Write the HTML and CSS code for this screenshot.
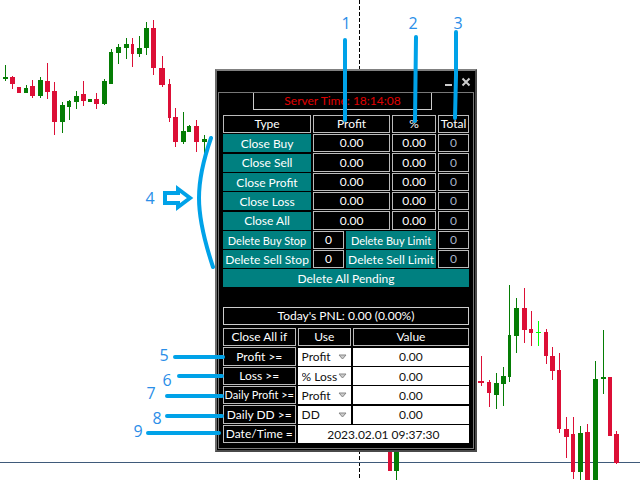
FILE: index.html
```
<!DOCTYPE html>
<html lang="en">
  <head>
    <meta charset="UTF-8" />
    <meta name="viewport" content="width=device-width, initial-scale=1.0" />
    <title>Trade Panel</title>
    <link rel="stylesheet" href="styles.css">
  </head>
  <body>
    <div class="desktop">
      <!-- Price chart -->
      <svg class="chart" id="chart" aria-hidden="true">
        <line class="period" x1="359.5" y1="0" x2="359.5" y2="100%" />
        <line class="price" x1="0" y1="462.5" x2="100%" y2="462.5" />
      </svg>

      <!-- Trade panel -->
      <div class="panel">
        <div class="titlebar">
          <button class="win-btn" aria-label="Minimize">
            <svg width="10" height="10" viewBox="0 0 10 10"><path d="M1 8H8" /></svg>
          </button>
          <button class="win-btn" aria-label="Close">
            <svg width="10" height="10" viewBox="0 0 10 10"><path d="M1.5 1.5L8.5 8.5M8.5 1.5L1.5 8.5" /></svg>
          </button>
        </div>
        <div class="content">
          <div class="server-time">Server Time: 18:14:08</div>

          <table class="grid orders">
            <colgroup>
              <col class="c-type" /><col class="c-count" /><col class="c-half" /><col class="c-half" /><col class="c-count" />
            </colgroup>
            <tr><th>Type</th><th colspan="2">Profit</th><th>%</th><th>Total</th></tr>
            <tr><td><button>Close Buy</button></td><td colspan="2">0.00</td><td>0.00</td><td class="dim">0</td></tr>
            <tr class="tall"><td><button>Close Sell</button></td><td colspan="2">0.00</td><td>0.00</td><td class="dim">0</td></tr>
            <tr><td><button>Close Profit</button></td><td colspan="2">0.00</td><td>0.00</td><td class="dim">0</td></tr>
            <tr><td><button>Close Loss</button></td><td colspan="2">0.00</td><td>0.00</td><td class="dim">0</td></tr>
            <tr class="tall"><td><button>Close All</button></td><td colspan="2">0.00</td><td>0.00</td><td class="dim">0</td></tr>
            <tr class="small"><td><button>Delete Buy Stop</button></td><td>0</td><td colspan="2"><button>Delete Buy Limit</button></td><td class="dim">0</td></tr>
            <tr><td><button>Delete Sell Stop</button></td><td>0</td><td colspan="2"><button>Delete Sell Limit</button></td><td class="dim">0</td></tr>
            <tr><td colspan="5"><button>Delete All Pending</button></td></tr>
          </table>

          <div class="pnl">Today's PNL: 0.00 (0.00%)</div>

          <table class="grid rules">
            <colgroup>
              <col class="c-rule" /><col class="c-use" /><col class="c-value" />
            </colgroup>
            <tr><th>Close All if</th><th>Use</th><th>Value</th></tr>
            <tr class="tall">
              <td><label for="profit">Profit &gt;=</label></td>
              <td><div class="drop"><select aria-label="Profit mode"><option>Profit</option></select><svg width="9" height="6" viewBox="0 0 9 6"><path d="M1 1H8L4.5 5Z" /></svg></div></td>
              <td><input type="text" id="profit" value="0.00" /></td>
            </tr>
            <tr>
              <td><label for="loss">Loss &gt;=</label></td>
              <td><div class="drop"><select aria-label="Loss mode"><option>% Loss</option></select><svg width="9" height="6" viewBox="0 0 9 6"><path d="M1 1H8L4.5 5Z" /></svg></div></td>
              <td><input type="text" id="loss" value="0.00" /></td>
            </tr>
            <tr class="small">
              <td><label for="dailyProfit">Daily Profit &gt;=</label></td>
              <td><div class="drop"><select aria-label="Daily profit mode"><option>Profit</option></select><svg width="9" height="6" viewBox="0 0 9 6"><path d="M1 1H8L4.5 5Z" /></svg></div></td>
              <td><input type="text" id="dailyProfit" value="0.00" /></td>
            </tr>
            <tr class="tall">
              <td><label for="dailyDd">Daily DD &gt;=</label></td>
              <td><div class="drop"><select aria-label="Daily drawdown mode"><option>DD</option></select><svg width="9" height="6" viewBox="0 0 9 6"><path d="M1 1H8L4.5 5Z" /></svg></div></td>
              <td><input type="text" id="dailyDd" value="0.00" /></td>
            </tr>
            <tr>
              <td><label for="dateTime">Date/Time =</label></td>
              <td colspan="2"><input type="text" id="dateTime" value="2023.02.01 09:37:30" /></td>
            </tr>
          </table>
        </div>
      </div>

      <!-- Numbered callouts -->
      <svg class="notes">
        <path d="M345 40V120M416 37L415 121M456 32V75L455 118" />
        <path d="M175 357H223M179 376H222M167 396H222M167 416H222M148 433H219" />
        <path d="M211 138C204 158 199 178 199 198C199 222 206 246 213 267" />
        <path d="M165 193H178V189L190 198L178 207V203H165Z" />
        <text x="346" y="29">1</text>
        <text x="413" y="29">2</text>
        <text x="458" y="29">3</text>
        <text x="150" y="204">4</text>
        <text x="164" y="361">5</text>
        <text x="167" y="386">6</text>
        <text x="151" y="399">7</text>
        <text x="157" y="424">8</text>
        <text x="138" y="437">9</text>
      </svg>
    </div>

    <script>
      // x, high, low, body top, body bottom, colour, body width
      const candles = [
        [5, 65, 81, 77, 79, "up", 5], [12, 76, 89, 77, 84, "down", 5],
        [19, 87, 93, 87, 93, "down", 4], [26, 85, 93, 88, 93, "up", 4],
        [32, 80, 98, 86, 96, "down", 5], [40, 77, 98, 80, 96, "up", 5],
        [47, 63, 99, 81, 92, "down", 5], [54, 82, 135, 91, 122, "down", 5],
        [62, 102, 133, 105, 122, "up", 5], [69, 100, 120, 101, 107, "up", 4],
        [76, 91, 109, 96, 102, "up", 5], [83, 81, 106, 94, 101, "down", 5],
        [90, 99, 102, 99, 102, "up", 4], [96, 93, 109, 99, 104, "down", 5],
        [104, 79, 105, 81, 104, "up", 5], [111, 49, 84, 52, 84, "up", 4],
        [118, 44, 64, 47, 53, "up", 5], [126, 38, 59, 44, 48, "up", 5],
        [132, 38, 67, 44, 54, "down", 3], [139, 36, 57, 48, 54, "up", 5],
        [146, 22, 55, 28, 48, "up", 5], [153, 20, 75, 28, 68, "down", 5],
        [162, 56, 87, 68, 85, "down", 6], [169, 79, 122, 84, 118, "down", 3],
        [175, 108, 147, 117, 142, "down", 5], [183, 112, 144, 131, 142, "up", 5],
        [189, 125, 132, 126, 132, "up", 4], [196, 120, 152, 126, 142, "down", 5],
        [204, 135, 160, 139, 142, "up", 5],
        [390, 440, 471, 440, 471, "down", 4], [396, 440, 480, 440, 471, "up", 5],
        [481, 356, 386, 381, 383, "down", 6], [489, 380, 407, 382, 393, "down", 4],
        [496, 373, 409, 383, 395, "up", 5], [503, 367, 406, 376, 384, "up", 5],
        [509, 285, 382, 335, 377, "up", 3], [516, 298, 353, 308, 336, "up", 5],
        [524, 288, 343, 308, 330, "down", 5], [531, 311, 346, 329, 333, "down", 4],
        [538, 321, 346, 332, 333, "doji", 5], [546, 329, 364, 332, 356, "down", 4],
        [552, 347, 380, 356, 371, "down", 5], [559, 353, 433, 370, 429, "down", 4],
        [566, 417, 458, 429, 437, "down", 5], [573, 417, 479, 434, 472, "down", 4],
        [580, 426, 480, 433, 472, "up", 5], [587, 424, 480, 432, 480, "down", 5],
        [595, 361, 480, 379, 480, "up", 5], [603, 330, 394, 377, 379, "up", 5],
        [610, 377, 436, 377, 436, "down", 4], [616, 431, 464, 434, 463, "down", 5],
      ];

      const chart = document.getElementById("chart");

      function addRect(x, y, width, height, className) {
        const rect = document.createElementNS("http://www.w3.org/2000/svg", "rect");
        rect.setAttribute("x", x);
        rect.setAttribute("y", y);
        rect.setAttribute("width", width);
        rect.setAttribute("height", height);
        rect.setAttribute("class", className);
        chart.appendChild(rect);
      }

      for (const [x, high, low, top, bottom, kind, width] of candles) {
        addRect(x, high, 1, low - high, kind);
        addRect(x - Math.floor(width / 2), top, width, bottom - top, kind);
      }
    </script>
  </body>
</html>
```
FILE: styles.css
```
body {
  margin: 0;
  background: #fff;
  font-family: Lato, "Liberation Sans", sans-serif;
  font-size: 12px;
}
.desktop {
  position: relative;
  min-height: 100vh;
  overflow: hidden;
}
.chart,
.notes {
  position: absolute;
  top: 0;
  left: 0;
  width: 100%;
  height: 100%;
}
.period {
  stroke: #000;
  stroke-dasharray: 4 2;
}
.price {
  stroke: #3f5a7a;
}
.up {
  fill: #057d05;
}
.down {
  fill: #dc0f36;
}
.doji {
  fill: #0f0;
}

/* Panel window */
.panel {
  position: absolute;
  top: 69px;
  left: 215px;
  width: 262px;
  box-sizing: border-box;
  padding: 0 1px 1px;
  border: 2px solid #6b6b6b;
  border-color: #808080 #4a4a4a #4a4a4a #6b6b6b;
  background: #000;
  color: #fff;
}
.titlebar {
  display: flex;
  justify-content: flex-end;
  align-items: center;
  gap: 7px;
  height: 21px;
  padding-right: 3px;
}
.win-btn {
  display: flex;
  padding: 0;
  border: none;
  background: none;
}
.win-btn path {
  fill: none;
  stroke: #ccc;
  stroke-width: 2;
}
.content {
  padding: 0 2px 4px;
  border: 1px solid #777;
}
.server-time {
  margin: 0 39px 4px 32px;
  border: 1px solid #ccc;
  border-top: none;
  color: #e00000;
  line-height: 16px;
  text-align: center;
}

/* Tables */
.grid {
  width: 100%;
  table-layout: fixed;
  border-spacing: 2px 1px;
}
.c-type {
  width: 37%;
}
.c-count {
  width: 13%;
}
.c-rule {
  width: 30%;
}
.c-use {
  width: 22%;
}
tr {
  height: 18px;
}
.tall {
  height: 19px;
}
th,
td {
  box-sizing: border-box;
  height: inherit;
  padding: 0;
  border: 1px solid #bbb;
  font-weight: normal;
  line-height: 16px;
  text-align: center;
  white-space: nowrap;
}
td:has(button),
td:has(input),
td:has(select) {
  border: none;
}
.dim {
  color: #a9b4c8;
}
.grid button,
input,
select {
  display: block;
  box-sizing: border-box;
  width: 100%;
  height: 18px;
  margin: 0;
  padding: 0;
  border: none;
  border-radius: 0;
  font-family: inherit;
  font-size: 12px;
  text-align: center;
}
.grid button {
  background: #008080;
  color: #fff;
}
.small button,
.small label {
  font-size: 11px;
}
input,
select {
  background: #fff;
  color: #111;
}
select {
  appearance: none;
  padding-left: 4px;
  text-align: left;
}
.drop {
  position: relative;
}
.drop svg {
  position: absolute;
  top: 6px;
  right: 4px;
}
.drop path {
  fill: #ccc;
  stroke: #888;
}
.pnl {
  margin: 19px 2px 2px;
  border: 1px solid #ccc;
  line-height: 16px;
  text-align: center;
}

/* Callouts */
.notes {
  pointer-events: none;
}
.notes path {
  fill: none;
  stroke: #00a2e8;
  stroke-width: 4;
  stroke-linecap: round;
}
.notes text {
  fill: #2a8ee8;
  font-family: "Open Sans", sans-serif;
  font-size: 16px;
  text-anchor: middle;
}
```
